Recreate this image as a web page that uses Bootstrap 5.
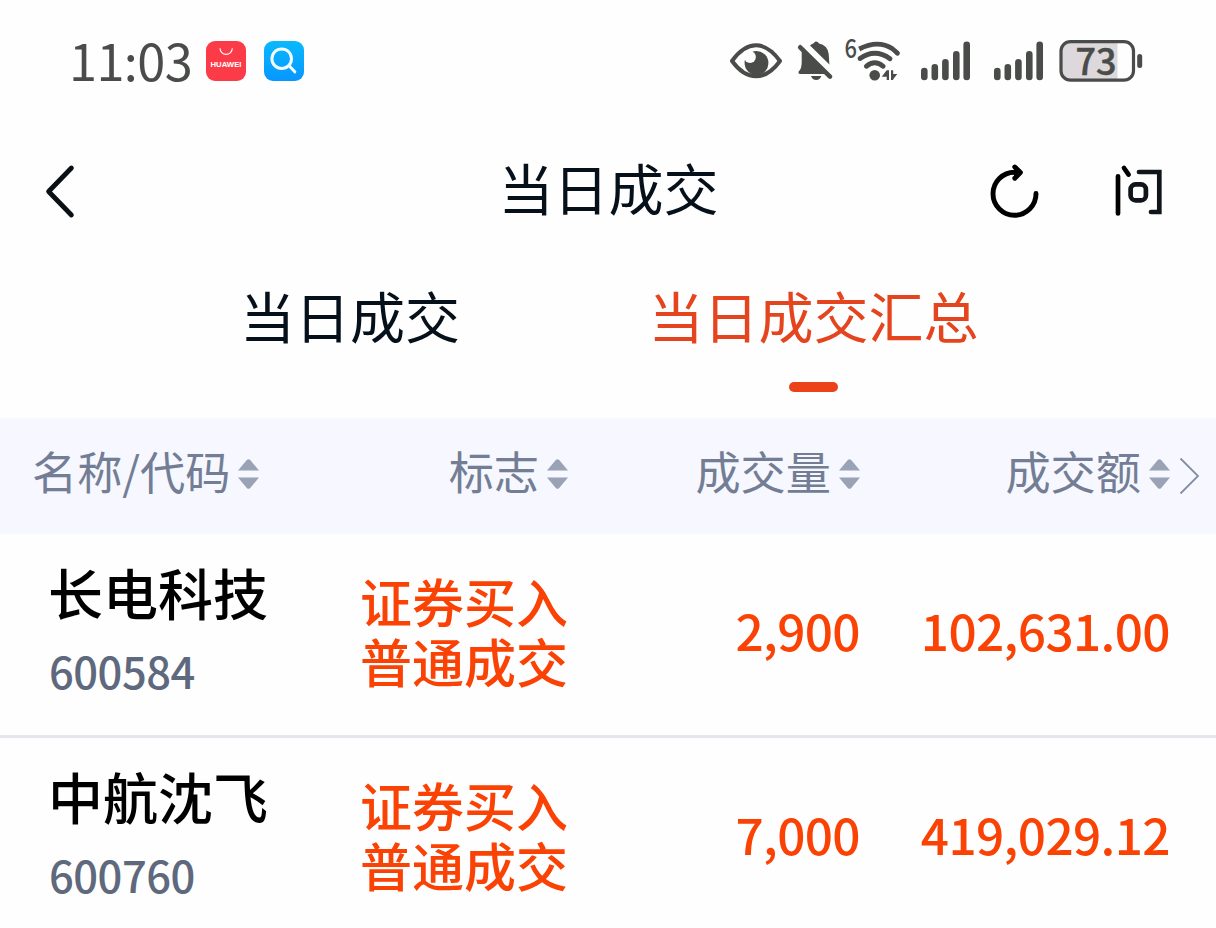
<!DOCTYPE html>
<html lang="zh-CN">
<head>
    <meta charset="UTF-8">
    <meta name="viewport" content="width=device-width, initial-scale=1.0">
    <title>当日成交</title>
    <link href="https://cdn.jsdelivr.net/npm/bootstrap@5.3.0/dist/css/bootstrap.min.css" rel="stylesheet">
    <style>
        body { background-color: #fefefe; font-family: "Noto Sans CJK SC", sans-serif; overflow: hidden; }
        svg { display: block; flex: none; overflow: visible; }

        .status-bar { height: 122px; padding: 0 73px 0 69px; color: #4a4c4a; }
        .status-time { font-size: 50.5px; line-height: 60px; width: 137px; margin-top: -5px; letter-spacing: -.6px; }
        .app-icon { margin-right: 18px; }

        .title-bar { height: 132px; padding: 5px 49px 0 45px; color: #06101a; }
        .title-bar h1 { font-size: 55px; line-height: 78px; margin: -9px 0 0 5px; font-weight: 400; }
        .title-side { width: 180px; }

        .tab-row { height: 164px; padding-left: 240px; gap: 188.5px; }
        .tab-item { font-size: 55px; line-height: 78px; padding: 21px 0 0; color: #06101a; }
        .tab-item.active { color: #e5451e; }
        .tab-bar { width: 49px; height: 10px; margin-top: 29px; background-color: #ec421a; }

        .deal-grid { display: grid; grid-template-columns: 330px 238px 292px 310px 46px; }
        .deal-head { height: 116px; background-color: #f6f7ff; color: #737e95; font-size: 45.2px; line-height: 60px; }
        .head-cell { gap: 8px; margin-top: -10px; }
        .head-cell svg { margin-top: 6px; }

        .deal-row { height: 204px; border-bottom: 3px solid #e5e7ec; color: #fb4205; font-weight: 500; }
        .deal-name { font-size: 55px; line-height: 78px; padding-top: 18px; color: #000; }
        .deal-code { font-size: 43.5px; line-height: 60px; margin: 11px 0 0 1px; color: #5f697d; letter-spacing: -.5px; }
        .deal-flag { font-size: 52px; line-height: 60px; padding-top: 37px; }
        .deal-num { font-size: 49.5px; line-height: 60px; padding-top: 66px; letter-spacing: -.6px; }
    </style>
</head>
<body>

    <!-- Status bar -->
    <div class="status-bar d-flex align-items-center">
        <div class="status-time">11:03</div>
        <svg class="app-icon" width="40" height="40" viewBox="0 0 40 40">
            <rect width="40" height="40" rx="9" fill="#fb3c48"/>
            <path d="M14 7.3a6.1 6 0 0 0 12.3 0" fill="none" stroke="#fff" stroke-width="1.1"/>
            <text x="4.5" y="25.6" font-family="Liberation Sans, sans-serif" font-size="7.8" font-weight="700" fill="#fff" textLength="31" lengthAdjust="spacingAndGlyphs">HUAWEI</text>
        </svg>
        <svg width="40" height="40" viewBox="0 0 40 40">
            <defs><linearGradient id="blue" x1="0" y1="0" x2="0" y2="1"><stop stop-color="#09b9fd"/><stop offset="1" stop-color="#0796ff"/></linearGradient></defs>
            <rect width="40" height="40" rx="9" fill="url(#blue)"/>
            <g fill="none" stroke="#f2fbff" stroke-width="3" stroke-linecap="round"><circle cx="17.7" cy="17.7" r="9.8"/><path d="M25.3 25l5.5 5.8"/></g>
        </svg>

        <div class="d-flex ms-auto">
            <!-- eye -->
            <svg width="66" height="44" viewBox="0 0 66 44">
                <path d="M2 22C10 11 18 6.3 26 6.3S42 11 50 22C42 33 34 37.3 26 37.3S10 33 2 22z" fill="none" stroke="#4a4c4a" stroke-width="4" stroke-linejoin="round"/>
                <circle cx="26.5" cy="24" r="11.9" fill="#4a4c4a"/>
                <circle cx="20" cy="18" r="5.9" fill="#fefefe"/>
                <path d="M14 14l6-4 3 3-4 5-6 1z" fill="#fefefe"/>
            </svg>
            <!-- muted bell -->
            <svg width="48" height="44" viewBox="0 0 48 44">
                <g fill="#4a4c4a">
                    <path d="M5.7 10V23Q5.7 30 2.6 32.6Q2 35 4 35H30z"/>
                    <path d="M14 6.6Q15.5 4.8 17.3 4.4Q19 2.4 20 2.5Q22 2.5 23 4.6Q31.5 6.3 32.7 15L33.4 25.5z"/>
                    <path d="M15 37H25.3Q24 41 20.2 41T15 37z"/>
                </g>
                <path d="M4.2 8.3L34 37.6" stroke="#4a4c4a" stroke-width="4.6" stroke-linecap="round"/>
            </svg>
            <!-- wifi 6 -->
            <svg width="77" height="44" viewBox="0 0 77 44">
                <text x="0.5" y="19.4" font-size="25.5" font-weight="500" fill="#4a4c4a" textLength="12.5" lengthAdjust="spacingAndGlyphs">6</text>
                <g fill="none" stroke="#4a4c4a" stroke-width="4.8">
                    <path d="M15.2 10Q34 .4 48.5 9.8L53.6 14.2"/>
                    <path d="M16 19.5Q31 9 46 19.8" stroke-linecap="round"/>
                    <path d="M22.3 27.3Q30.7 20.3 39.2 27.3" stroke-linecap="round"/>
                    <path d="M53.2 14l.3.2" stroke-linecap="round"/>
                </g>
                <g fill="#4a4c4a">
                    <circle cx="30.7" cy="36.3" r="5.3"/>
                    <path d="M37.7 37.7L42.7 31.3H45V41H42.7V37.7zM47 31.3H49.2V35H53.3L49.2 40.3V41H47z"/>
                </g>
            </svg>
            <!-- signal, sim 1 and sim 2 -->
            <svg width="73" height="44" viewBox="0 0 73 44">
                <path d="M3.3 32v6M13.8 28.4v9.6M24.4 23.4v14.6M35.3 15.4v22.6M45.7 5.7v32.3" stroke="#4a4c4a" stroke-width="6.6" stroke-linecap="round"/>
            </svg>
            <svg width="64.5" height="44" viewBox="0 0 64.5 44">
                <path d="M3.3 32v6M13.8 28.4v9.6M24.4 23.4v14.6M35.3 15.4v22.6M45.7 5.7v32.3" stroke="#4a4c4a" stroke-width="6.6" stroke-linecap="round"/>
            </svg>
            <!-- battery -->
            <svg width="84.5" height="44" viewBox="0 0 84.5 44">
                <path d="M58.5 3.5V41H12Q3 41 3 31V13Q3 3.5 12 3.5z" fill="#dcd8dc"/>
                <rect x="2" y="2.6" width="72.5" height="38.6" rx="9.5" fill="none" stroke="#4a4c4a" stroke-width="3.2"/>
                <rect x="78.2" y="15" width="5" height="14" rx="2.5" fill="#4a4c4a"/>
                <text x="16.5" y="35.8" font-size="36" font-weight="500" fill="#4a4c4a" stroke="#4a4c4a" stroke-width=".5">73</text>
            </svg>
        </div>
    </div>

    <!-- Title bar -->
    <div class="title-bar d-flex align-items-center justify-content-between">
        <div class="title-side">
            <svg width="32" height="54" viewBox="0 0 32 54" fill="none" stroke="#0a0f14" stroke-width="4.8" stroke-linecap="round" stroke-linejoin="round">
                <path d="M26.4 4L3.6 27.5L26.4 51"/>
            </svg>
        </div>
        <h1>当日成交</h1>
        <div class="title-side d-flex justify-content-between">
            <svg width="52" height="54" viewBox="0 0 52 54" fill="none" stroke="#000" stroke-width="4.9" stroke-linecap="round" stroke-linejoin="round">
                <path d="M49 29.5A21.5 21.5 0 1 1 27.6 8.3H31M27.8 3L33.4 8.6L27.8 14.2"/>
                <path d="M28 5L32 8.6L28 12z" fill="#000" stroke-width="2"/>
            </svg>
            <svg width="54" height="54" viewBox="0 0 54 54" fill="none" stroke="#10141b" stroke-width="4.7" stroke-linecap="round">
                <path d="M5 12.3V49.4M11 4L15.6 10.6" stroke="#000"/>
                <path d="M26 8H46.3V48H38"/>
                <rect x="17.6" y="20.4" width="15.3" height="16" rx="5"/>
            </svg>
        </div>
    </div>

    <!-- Tabs -->
    <div class="tab-row d-flex align-items-start">
        <div class="tab-item">当日成交</div>
        <div class="tab-item active d-flex flex-column align-items-center">
            当日成交汇总
            <div class="tab-bar rounded-pill"></div>
        </div>
    </div>

    <!-- Table head -->
    <div class="deal-grid deal-head align-items-center">
        <div class="head-cell d-flex align-items-center ps-4 ms-2">名称/代码
            <svg width="21" height="30" viewBox="0 0 21 30" fill="#9aa2b6"><path d="M0 11.5L9 .8q1.5-1.2 3 0L21 11.5zM0 18.5L9 29.2q1.5 1.2 3 0L21 18.5z"/></svg>
        </div>
        <div class="head-cell d-flex align-items-center justify-content-end">标志
            <svg width="21" height="30" viewBox="0 0 21 30" fill="#9aa2b6"><path d="M0 11.5L9 .8q1.5-1.2 3 0L21 11.5zM0 18.5L9 29.2q1.5 1.2 3 0L21 18.5z"/></svg>
        </div>
        <div class="head-cell d-flex align-items-center justify-content-end">成交量
            <svg width="21" height="30" viewBox="0 0 21 30" fill="#9aa2b6"><path d="M0 11.5L9 .8q1.5-1.2 3 0L21 11.5zM0 18.5L9 29.2q1.5 1.2 3 0L21 18.5z"/></svg>
        </div>
        <div class="head-cell d-flex align-items-center justify-content-end">成交额
            <svg width="21" height="30" viewBox="0 0 21 30" fill="#9aa2b6"><path d="M0 11.5L9 .8q1.5-1.2 3 0L21 11.5zM0 18.5L9 29.2q1.5 1.2 3 0L21 18.5z"/></svg>
        </div>
        <svg width="30" height="38" viewBox="0 0 30 38" fill="none" stroke="#858ea3" stroke-width="1.8"><path d="M10.5 1.5L28 19L10.5 36.5"/></svg>
    </div>

    <!-- Deals -->
    <div class="deal-grid deal-row">
        <div class="ps-5">
            <div class="deal-name">长电科技</div>
            <div class="deal-code">600584</div>
        </div>
        <div class="deal-flag text-end">证券买入<br>普通成交</div>
        <div class="deal-num text-end">2,900</div>
        <div class="deal-num text-end">102,631.00</div>
    </div>
    <div class="deal-grid deal-row border-bottom-0">
        <div class="ps-5">
            <div class="deal-name">中航沈飞</div>
            <div class="deal-code">600760</div>
        </div>
        <div class="deal-flag text-end">证券买入<br>普通成交</div>
        <div class="deal-num text-end">7,000</div>
        <div class="deal-num text-end">419,029.12</div>
    </div>

    <script src="https://cdn.jsdelivr.net/npm/bootstrap@5.3.0/dist/js/bootstrap.bundle.min.js"></script>
</body>
</html>
